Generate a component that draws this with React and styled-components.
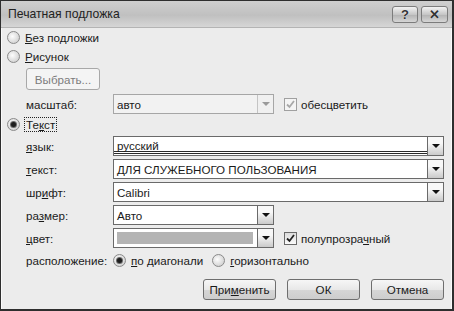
import React from 'react';
import styled, { createGlobalStyle, css } from 'styled-components';

const Global = createGlobalStyle`
  body {
    margin: 0;
    background: #ececec;
    font-family: "Liberation Sans", Arial, sans-serif;
    font-size: 11.6px;
    color: #1a1a1a;
  }
`;

const Window = styled.div`
  width: 454px;
  height: 311px;
  box-sizing: border-box;
  border: 1px solid #2e2e2e;
  border-width: 1px 2px 2px 1px;
  background: #ececec;
  display: flex;
  flex-direction: column;
  overflow: hidden;
`;

const TitleBar = styled.div`
  height: 26px;
  flex: none;
  display: flex;
  align-items: center;
  justify-content: space-between;
  padding: 0 4px 0 7px;
  background: linear-gradient(#cfcfcf, #c0c0c0 55%, #d6d6d6);
  border-bottom: 1px solid #b4b4b4;
  font-size: 12.2px;
  color: #222;
`;

const TitleButtons = styled.div`
  display: flex;
  gap: 3px;
`;

const TitleButton = styled.div`
  width: ${(p) => p.$w}px;
  height: 17px;
  box-sizing: border-box;
  border: 1px solid #7c7c7c;
  border-radius: 3px;
  background: linear-gradient(#f2f2f2, #c6c6c6 50%, #b2b2b2 51%, #d6d6d6);
  display: flex;
  align-items: center;
  justify-content: center;
  font-weight: bold;
  font-size: 13px;
  color: #333;
  text-shadow: 0 0 1px #fff;
`;

const Content = styled.div`
  flex: 1;
  display: flex;
  flex-direction: column;
  padding: 0 7px 0 5px;
  border-left: 1px solid #fafafa;
  border-right: 1px solid #fafafa;
`;

const OptionRow = styled.label`
  height: ${(p) => p.$h || 19}px;
  display: flex;
  align-items: center;
  gap: 5px;
`;

const Radio = styled.span`
  width: 13px;
  height: 13px;
  box-sizing: border-box;
  border-radius: 50%;
  border: 1px solid #8a8a8a;
  background: radial-gradient(circle at 40% 40%, #fdfdfd, #d6d6d6 70%);
  display: inline-flex;
  align-items: center;
  justify-content: center;
  flex: none;
  ${(p) =>
    p.$checked &&
    css`
      &::after {
        content: '';
        width: 5px;
        height: 5px;
        border-radius: 50%;
        background: #1e1e1e;
        box-shadow: 0 0 0 1px #6a6a6a;
      }
    `}
`;

const Focus = styled.span`
  outline: 1px dotted #222;
  padding: 0 1px;
`;

const U = styled.span`
  text-decoration: underline;
  text-underline-offset: 1px;
`;

const Indented = styled.div`
  padding-left: 19px;
  display: flex;
  flex-direction: column;
`;

const PushButton = styled.div`
  width: ${(p) => p.$w || 73}px;
  height: ${(p) => p.$h || 21}px;
  box-sizing: border-box;
  border: 1px solid ${(p) => (p.$disabled ? '#a8a8a8' : '#6e6e6e')};
  border-radius: 3px;
  background: ${(p) =>
    p.$disabled
      ? '#f4f4f4'
      : 'linear-gradient(#f6f6f6, #e8e8e8 50%, #d6d6d6 51%, #cdcdcd)'};
  color: ${(p) => (p.$disabled ? '#7c7c7c' : '#1a1a1a')};
  display: flex;
  align-items: center;
  justify-content: center;
  flex: none;
  margin-top: ${(p) => p.$mt || 0}px;
`;

const FieldGrid = styled.div`
  display: grid;
  grid-template-columns: 87px 1fr;
  row-gap: 3px;
  align-items: center;
  margin-top: ${(p) => p.$mt || 0}px;
`;

const Label = styled.div`
  height: ${(p) => p.$h || 20}px;
  display: flex;
  align-items: center;
`;

const Inline = styled.div`
  display: flex;
  align-items: center;
  gap: ${(p) => p.$gap || 10}px;
  height: ${(p) => p.$h || 20}px;
`;

const Select = styled.div`
  width: ${(p) => (p.$w ? `${p.$w}px` : '100%')};
  height: 20px;
  box-sizing: border-box;
  border: 1px solid ${(p) => (p.$disabled ? '#a6a6a6' : '#6a6a6a')};
  background: ${(p) => (p.$disabled ? '#f2f2f2' : '#fff')};
  display: flex;
  flex: none;
`;

const SelectText = styled.div`
  flex: 1;
  display: flex;
  align-items: center;
  padding-left: 3px;
  box-sizing: border-box;
  ${(p) =>
    p.$focused &&
    css`
      border-bottom: 3px double #2a2a2a;
      margin-bottom: 1px;
      padding-top: 2px;
    `}
`;

const Swatch = styled.div`
  flex: 1;
  margin: 3px 4px 3px 3px;
  background: #b4b4b4;
`;

const Arrow = styled.div`
  width: 16px;
  flex: none;
  box-sizing: border-box;
  border-left: 1px solid ${(p) => (p.$disabled ? '#c4c4c4' : '#6a6a6a')};
  background: ${(p) =>
    p.$disabled ? '#f0f0f0' : 'linear-gradient(#f8f8f8 35%, #cacaca)'};
  display: flex;
  align-items: center;
  justify-content: center;
  &::after {
    content: '';
    border-left: 4px solid transparent;
    border-right: 4px solid transparent;
    border-top: 4px solid ${(p) => (p.$disabled ? '#9a9a9a' : '#111')};
  }
`;

const CheckWrap = styled.label`
  display: flex;
  align-items: center;
  gap: 4px;
  color: #1a1a1a;
`;

const CheckBox = styled.span`
  width: 13px;
  height: 13px;
  box-sizing: border-box;
  border: 1px solid ${(p) => (p.$disabled ? '#a0a0a0' : '#6a6a6a')};
  background: ${(p) => (p.$disabled ? '#f4f4f4' : 'linear-gradient(#dcdcdc, #fbfbfb)')};
  display: inline-flex;
  align-items: center;
  justify-content: center;
`;

const Footer = styled.div`
  display: flex;
  justify-content: flex-end;
  gap: 11px;
  margin-top: 9px;
`;

const Check = ({ color }) => (
  <svg width="9" height="9" viewBox="0 0 9 9">
    <path d="M1 4.5 L3.5 7 L8 1" fill="none" stroke={color} strokeWidth="1.8" />
  </svg>
);

const Dropdown = ({ w, disabled, focused, swatch, children }) => (
  <Select $w={w} $disabled={disabled}>
    {swatch ? <Swatch /> : <SelectText $focused={focused}>{children}</SelectText>}
    <Arrow $disabled={disabled} />
  </Select>
);

export default function App() {
  return (
    <>
      <Global />
      <Window>
        <TitleBar>
          <span>Печатная подложка</span>
          <TitleButtons>
            <TitleButton $w={26}>?</TitleButton>
            <TitleButton $w={27}>✕</TitleButton>
          </TitleButtons>
        </TitleBar>
        <Content>
          <OptionRow>
            <Radio />
            <span><U>Б</U>ез подложки</span>
          </OptionRow>
          <OptionRow>
            <Radio />
            <span><U>Р</U>исунок</span>
          </OptionRow>
          <Indented>
            <PushButton $w={74} $h={22} $mt={2} $disabled>Выбрать...</PushButton>
            <FieldGrid $mt={4}>
              <Label>масштаб:</Label>
              <Inline>
                <Dropdown w={161} disabled>авто</Dropdown>
                <CheckWrap>
                  <CheckBox $disabled><Check color="#a8a8a8" /></CheckBox>
                  обесцветить
                </CheckWrap>
              </Inline>
            </FieldGrid>
          </Indented>
          <OptionRow $h={21}>
            <Radio $checked />
            <Focus>Те<U>к</U>ст</Focus>
          </OptionRow>
          <Indented>
            <FieldGrid $mt={1}>
              <Label><span><U>я</U>зык:</span></Label>
              <Dropdown focused>русский</Dropdown>
              <Label><span><U>т</U>екст:</span></Label>
              <Dropdown>ДЛЯ СЛУЖЕБНОГО ПОЛЬЗОВАНИЯ</Dropdown>
              <Label><span>шр<U>и</U>фт:</span></Label>
              <Dropdown>Calibri</Dropdown>
              <Label><span>ра<U>з</U>мер:</span></Label>
              <Dropdown w={161}>Авто</Dropdown>
              <Label><span><U>ц</U>вет:</span></Label>
              <Inline>
                <Dropdown w={161} swatch />
                <CheckWrap>
                  <CheckBox><Check color="#222" /></CheckBox>
                  <span>полупрозра<U>ч</U>ный</span>
                </CheckWrap>
              </Inline>
              <Label $h={19}>расположение:</Label>
              <Inline $h={19} $gap={9}>
                <OptionRow>
                  <Radio $checked />
                  <span><U>п</U>о диагонали</span>
                </OptionRow>
                <OptionRow>
                  <Radio />
                  <span><U>г</U>оризонтально</span>
                </OptionRow>
              </Inline>
            </FieldGrid>
          </Indented>
          <Footer>
            <PushButton>При<U>м</U>енить</PushButton>
            <PushButton>ОК</PushButton>
            <PushButton>Отмена</PushButton>
          </Footer>
        </Content>
      </Window>
    </>
  );
}
